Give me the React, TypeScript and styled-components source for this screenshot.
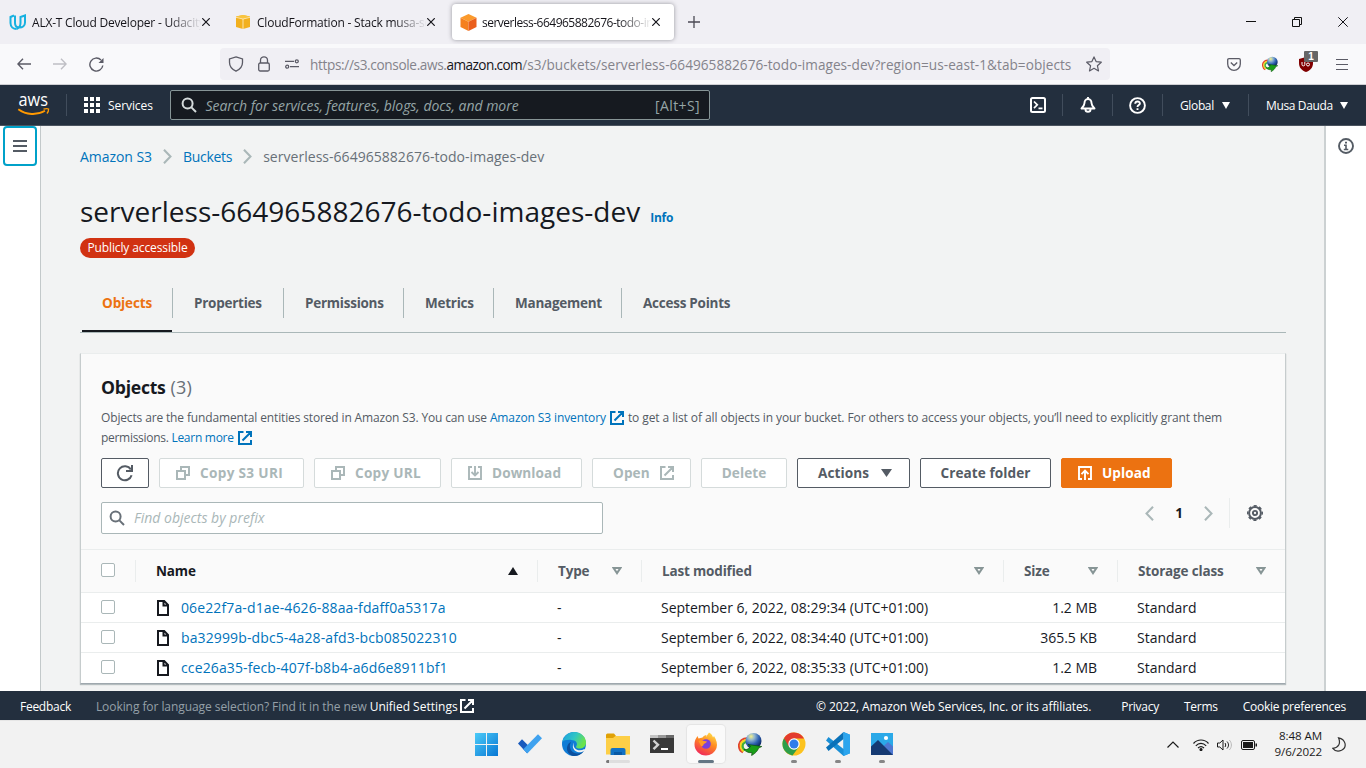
import React from "react";
import styled, { createGlobalStyle, css } from "styled-components";

const GlobalStyle = createGlobalStyle`
  *, *::before, *::after { box-sizing: border-box; }
  html, body { margin: 0; padding: 0; overflow: hidden; }
  body { font-family: "Open Sans", "Noto Sans", sans-serif; font-size: 14px; color: #16191f; }
  svg { display: block; flex: none; }
`;

const Screen = styled.div`
  display: flex;
  flex-direction: column;
  width: 1366px;
  height: 768px;
  background: #fff;
`;

/* ---------- browser chrome ---------- */

const TabStrip = styled.div`
  display: flex;
  align-items: center;
  height: 44px;
  background: #f0eff4;
`;
const BrowserTab = styled.div<{ $active?: boolean }>`
  display: flex;
  align-items: center;
  width: 222px;
  height: 36px;
  margin: 0 1px 0 2px;
  padding-left: ${(p) => (p.$active ? 8 : 7)}px;
  border-radius: 4px;
  ${(p) => p.$active && css`background: #fff; box-shadow: 0 0 4px rgba(90, 90, 100, 0.6);`}
`;
const TabLabel = styled.span<{ $gap?: number }>`
  width: 169px;
  margin-left: ${(p) => p.$gap ?? 6}px;
  padding-top: 2px;
  margin-right: 1px;
  overflow: hidden;
  white-space: nowrap;
  font-size: 12px;
  line-height: 20px;
  letter-spacing: var(--track, -0.21px);
  color: #15141a;
  mask-image: linear-gradient(to right, #000 136px, transparent 170px);
`;
const NarrowLabel = styled(TabLabel)`
  --track: -0.5px;
`;
const NewTab = styled.div`
  margin-left: 13px;
`;
const WindowButtons = styled.div`
  display: flex;
  margin-left: auto;
`;
const WindowButton = styled.div`
  display: grid;
  place-items: center;
  width: 46px;
  height: 44px;
`;
const Toolbar = styled.div`
  display: flex;
  align-items: center;
  height: 41px;
  padding: 0 6px;
  background: #f9f9fb;
  border-bottom: 1px solid #cfcfd3;
`;
const ToolSlot = styled.div`
  position: relative;
  display: grid;
  place-items: center;
  width: 36px;
  height: 32px;
`;
const UrlBox = styled.div`
  display: flex;
  align-items: center;
  width: 890px;
  height: 32px;
  margin-left: 106px;
  padding: 0 2px;
  border-radius: 4px;
  background: #f0eff4;
`;
const UrlSlot = styled.div`
  display: grid;
  place-items: center;
  width: 28px;
`;
const Url = styled.div`
  flex: 1;
  margin-left: 4px;
  padding-top: 2px;
  white-space: nowrap;
  line-height: 20px;
  font-size: 13.6px;
  letter-spacing: 0.04px;
  color: #84838b;
`;
const Scheme = styled.span`letter-spacing: -0.35px;`;
const Host = styled.span`letter-spacing: -0.59px; color: #15141a;`;
const ToolbarEnd = styled.div`
  display: flex;
  margin-left: auto;
`;
const Count = styled.span`
  position: absolute;
  left: 16px;
  top: 3px;
  width: 14px;
  height: 11px;
  border-radius: 1px;
  background: #666;
  color: #fff;
  text-align: center;
  font: bold 10px/11px "Liberation Sans", sans-serif;
`;

/* ---------- console header ---------- */

const Nav = styled.header`
  display: flex;
  align-items: center;
  height: 41px;
  background: #232f3e;
  border-bottom: 1px solid #4b545f;
  color: #fff;
  font-size: 12px;
`;
const NavRule = styled.i`
  width: 1px;
  height: 22px;
  background: #414d5c;
`;
const Logo = styled.div`
  width: 66px;
  padding-left: 16px;
`;
const Services = styled.div`
  display: flex;
  align-items: center;
  gap: 8px;
  width: 103px;
  padding-left: 17px;
  font-weight: 500;
  letter-spacing: -0.08px;
`;
const NavSearch = styled.div`
  display: flex;
  align-items: center;
  width: 540px;
  height: 30px;
  padding: 0 9px 0 10px;
  border: 1px solid #879596;
  border-radius: 2px;
  background: #161a20;
  color: #95a5a6;
  font-size: 14px;
`;
const Hint = styled.em`
  margin-left: 8.5px;
  letter-spacing: -0.04px;
`;
const Shortcut = styled.span`
  margin-left: auto;
  letter-spacing: 0.4px;
`;
const NavEnd = styled.div`
  display: flex;
  align-items: center;
  margin-left: auto;
`;
const NavIcon = styled.div`
  display: grid;
  place-items: center;
  width: 49px;
`;
const NavMenu = styled.div<{ $w: number }>`
  display: flex;
  align-items: center;
  justify-content: space-between;
  width: ${(p) => p.$w}px;
  padding: 0 18px 0 17px;
  font-weight: 500;
  letter-spacing: -0.36px;
`;

/* ---------- page ---------- */

const Body = styled.div`
  display: flex;
  height: 565px;
`;
const Rail = styled.aside<{ $right?: boolean }>`
  flex: none;
  width: ${(p) => (p.$right ? 42 : 41)}px;
  background: #fff;
  ${(p) => (p.$right ? css`border-left: 2px solid #ccd1d2; padding: 12px 0 0 12px;` : css`border-right: 1px solid #c3c9ca; padding-left: 3px;`)}
`;
const MenuButton = styled.div`
  display: grid;
  place-items: center;
  width: 34px;
  height: 40px;
  border: 2px solid #00a1c9;
  border-radius: 4px;
`;
const Main = styled.main`
  flex: 1;
  padding: 20px 38px 0 39px;
  background: #f2f3f3;
`;
const Crumbs = styled.nav`
  display: flex;
  align-items: center;
  height: 22px;
  line-height: 22px;
  padding-bottom: 1px;
`;
const CrumbArrow = styled.div`margin: 0 11px 0 11px;`;
const Link = styled.a<{ $track?: number }>`
  color: #0073bb;
  letter-spacing: ${(p) => p.$track ?? 0}px;
`;
const Current = styled.span`color: #687078; letter-spacing: 0.03px;`;
const TitleRow = styled.div`
  display: flex;
  align-items: baseline;
  height: 44px;
  margin-top: 23px;
`;
const Title = styled.h1`
  margin: 0;
  font-size: 28px;
  line-height: 40px;
  font-weight: 400;
  letter-spacing: 0.01px;
`;
const Info = styled.a`
  margin-left: 10px;
  color: #0073bb;
  font-size: 12px;
  font-weight: 700;
  letter-spacing: -0.23px;
`;
const Badge = styled.span`
  display: block;
  width: 115px;
  height: 20px;
  margin-top: 3px;
  border-radius: 10px;
  background: #d13212;
  color: #fff;
  text-align: center;
  font-size: 12px;
  line-height: 19px;
  letter-spacing: -0.12px;
`;
const Tabs = styled.div`
  display: flex;
  height: 45px;
  margin-top: 30px;
  padding-left: 1px;
  border-bottom: 1px solid #aab7b8;
`;
const Tab = styled.div<{ $w: number; $active?: boolean }>`
  position: relative;
  width: ${(p) => p.$w}px;
  height: 30px;
  padding-left: 21px;
  border-right: 1px solid #aab7b8;
  font-size: 13.5px;
  line-height: 30px;
  font-weight: 700;
  letter-spacing: -0.25px;
  white-space: nowrap;
  color: ${(p) => (p.$active ? "#ec7211" : "#545b64")};
  &:last-child { border-right: 0; }
  ${(p) => p.$active && css`
    letter-spacing: -0.1px;
    &::after { content: ""; position: absolute; left: 1px; right: 0; top: 42px; height: 2px; background: #16191f; }
  `}
`;
const Card = styled.section`
  width: 1206px;
  height: 331px;
  margin-top: 20px;
  border: 1px solid #eaeded;
  border-left-color: #c6cccd;
  border-right-color: #c6cccd;
  border-bottom-color: #9fa8ae;
  background: #fafafa;
  box-shadow: 0 1px 1px rgba(0, 28, 36, 0.25);
`;
const CardHead = styled.div`
  height: 196px;
  padding: 21px 20px 0;
  border-bottom: 1px solid #eaeded;
`;
const Heading = styled.h2`
  margin: 0;
  font-size: 17.6px;
  line-height: 24px;
  letter-spacing: -0.25px;
`;
const Total = styled.span`
  margin-left: 5px;
  font-weight: 400;
  font-size: 18px;
  letter-spacing: 0.2px;
  color: #687078;
`;
const Desc = styled.p`
  margin: 9px 0 0;
  color: #545b64;
  font-size: 12px;
  line-height: 20px;
  letter-spacing: -0.145px;
  white-space: nowrap;
`;
const Wide = styled.span`letter-spacing: -0.095px;`;
const Tight = styled.span`letter-spacing: -0.29px;`;
const InlineIcon = styled.span`
  display: inline-block;
  margin: 0 4px;
  vertical-align: -3px;
`;
const Actions = styled.div`
  display: flex;
  gap: 10px;
  margin-top: 10px;
`;
const Button = styled.button<{ $w: number; $kind?: "off" | "primary"; $pad?: number; $track?: number }>`
  display: flex;
  align-items: center;
  justify-content: ${(p) => (p.$pad ? "flex-start" : "center")};
  gap: 10px;
  width: ${(p) => p.$w}px;
  height: 30px;
  padding: 0 0 0 ${(p) => p.$pad ?? 0}px;
  border: 1px solid #545b64;
  border-radius: 2px;
  background: #fff;
  color: #545b64;
  font: 700 13.6px/26px "Open Sans", sans-serif;
  letter-spacing: ${(p) => p.$track ?? 0.08}px;
  white-space: nowrap;
  ${(p) => p.$kind === "off" && css`border-color: #d5dbdb; color: #aab7b8;`}
  ${(p) => p.$kind === "primary" && css`border-color: #ec7211; background: #ec7211; color: #fff;`}
`;
const ButtonText = styled.span`
  height: 28px;
  line-height: 27px;
`;
const MenuCaret = styled.span`
  margin-left: 2px;
`;
const FilterRow = styled.div`
  display: flex;
  margin-top: 14px;
`;
const Filter = styled.div`
  display: flex;
  align-items: center;
  gap: 9px;
  width: 502px;
  height: 32px;
  padding-left: 7px;
  border: 1px solid #aab7b8;
  border-radius: 2px;
  background: #fff;
  color: #687078;
`;
const Placeholder = styled.em`
  height: 30px;
  line-height: 29px;
  color: #aab7b8;
`;
const Pager = styled.div`
  display: flex;
  align-items: center;
  height: 30px;
  margin: -4px 2px 0 auto;
`;
const PageNo = styled.b`
  width: 50px;
  text-align: center;
  font-size: 13.5px;
`;
const PagerRule = styled.i`
  width: 1px;
  height: 30px;
  margin: 0 17px 0 16px;
  background: #eaeded;
`;

const Row = styled.div<{ $head?: boolean; $last?: boolean }>`
  display: grid;
  grid-template-columns: 55px 402px 104px 362px 114px 167px;
  align-items: center;
  height: ${(p) => (p.$head ? 43 : 30)}px;
  background: ${(p) => (p.$head ? "#fafafa" : "#fff")};
  border-bottom: 1px solid ${(p) => (p.$last ? "#fff" : "#eaeded")};
`;
const Th = styled.div<{ $dark?: boolean }>`
  display: flex;
  align-items: center;
  justify-content: space-between;
  height: 22px;
  padding: 0 19px 0 20px;
  border-right: 1px solid #eaeded;
  color: ${(p) => (p.$dark ? "#16191f" : "#545b64")};
  font-size: 13.5px;
  font-weight: 700;
  letter-spacing: -0.17px;
  &:first-child { padding-left: 19px; }
  &:last-child { border-right: 0; }
`;
const Td = styled.div<{ $end?: boolean }>`
  display: flex;
  align-items: center;
  gap: 12px;
  justify-content: ${(p) => (p.$end ? "flex-end" : "flex-start")};
  padding: 0 21px 0 19px;
  letter-spacing: -0.02px;
  white-space: nowrap;
`;
const NameTd = styled(Td)`
  padding-left: 21px;
`;
const Check = styled.span`
  width: 14px;
  height: 14px;
  margin: -2px 0 0 1px;
  border: 1px solid #aab7b8;
  border-radius: 2px;
  background: #fff;
`;

const Footer = styled.footer`
  display: flex;
  align-items: center;
  height: 29px;
  padding: 1px 20px 0;
  background: #232f3e;
  color: #fff;
  font-size: 12px;
  white-space: nowrap;
`;
const FootItem = styled.span<{ $gap?: number; $track?: number; $dim?: boolean }>`
  margin-left: ${(p) => p.$gap ?? 0}px;
  letter-spacing: ${(p) => p.$track ?? -0.27}px;
  font-weight: ${(p) => (p.$dim ? 400 : 500)};
  color: ${(p) => (p.$dim ? "#95a0a8" : "#fff")};
`;
const FootIcon = styled.span`
  margin: -1px 0 0 2px;
`;
const FootEnd = styled.div`
  display: flex;
  margin-left: auto;
`;

/* ---------- taskbar ---------- */

const Taskbar = styled.div`
  display: grid;
  grid-template-columns: 464px 440px 1fr;
  height: 48px;
  border-top: 1px solid #e6e6e6;
  background: #f2f2f2;
`;
const Apps = styled.div`
  grid-column: 2;
  display: flex;
`;
const AppSlot = styled.div`
  display: flex;
  flex-direction: column;
  align-items: center;
  width: 44px;
  padding-top: 4px;
`;
const AppTile = styled.div<{ $active?: boolean }>`
  position: relative;
  display: grid;
  place-items: center;
  width: 38px;
  height: 38px;
  border-radius: 4px;
  ${(p) => p.$active && css`background: #fafafa; box-shadow: 0 0 1px 1px #e4e4e4;`}
`;
const Running = styled.i<{ $w: number; $tone?: string }>`
  position: absolute;
  bottom: 0;
  width: ${(p) => p.$w}px;
  height: 3px;
  border-radius: 2px;
  background: ${(p) => p.$tone ?? "#868686"};
`;
const Tray = styled.div`
  display: flex;
  align-items: center;
  justify-content: flex-end;
  padding-right: 20px;
`;
const TrayIcons = styled.div`
  display: flex;
  align-items: center;
  gap: 8px;
  margin-right: 18px;
`;
const Clock = styled.div`
  margin: -2px 10px 0 0;
  text-align: right;
  font-size: 11.6px;
  line-height: 16px;
  letter-spacing: -0.1px;
  color: #1b1b1b;
`;

/* ---------- icons ---------- */

const CloseX = ({ s = 8, w = 1.2 }: { s?: number; w?: number }) => (
  <svg width={s} height={s} viewBox="0 0 10 10" stroke="#15141a" strokeWidth={w * 10 / s}><path d="M0.3 0.3 9.7 9.7M9.7 0.3 0.3 9.7" /></svg>
);
const Lens = ({ c }: { c: string }) => (
  <svg width="16" height="16" viewBox="0 0 16 16" fill="none" stroke={c} strokeWidth="2"><circle cx="6.6" cy="6.6" r="5" /><path d="m10.4 10.4 4.6 4.6" /></svg>
);
const External = ({ s = 14 }: { s?: number }) => (
  <svg width={s} height={s} viewBox="0 0 14 14" fill="none" stroke="currentColor" strokeWidth="2"><path d="M5.5 1H1v12h12V9M8 1h5v5M12.8 1.2 4.5 9.5" /></svg>
);
const CopyIcon = () => (
  <svg width="14" height="14" viewBox="0 0 14 14" fill="none" stroke="currentColor" strokeWidth="2"><path d="M1 5h8v8H1zM5 5V1h8v8H9" /></svg>
);
const DownloadIcon = () => (
  <svg width="14" height="14" viewBox="0 0 14 14" fill="none" stroke="currentColor" strokeWidth="1.9"><path d="M4 1H1v12h12V1h-3M7 0v9M3.5 6 7 9.500 10.500 6" /></svg>
);
const UploadIcon = () => (
  <svg width="14" height="14" viewBox="0 0 14 14" fill="none" stroke="currentColor" strokeWidth="1.9"><path d="M4 13H1V1h12v12h-3M7 14V5M3.500 8.200 7 4.700l3.500 3.500" /></svg>
);
const Refresh = () => (
  <svg width="18" height="18" viewBox="0 0 18 18" fill="none" stroke="currentColor" strokeWidth="2"><path d="M15.600 11.200A7 7 0 1 1 14.800 5.500M16 1v6h-6" /></svg>
);
const Chevron = ({ left, w = 8, h = 14 }: { left?: boolean; w?: number; h?: number }) => (
  <svg width={w} height={h} viewBox="0 0 8 14" fill="none" stroke="#aab7b8" strokeWidth="1.900"><path d={left ? "M7.300 .7 1.200 7l6.100 6.300" : "M.7.700 6.800 7 .7 13.300"} /></svg>
);
const Sort = ({ up }: { up?: boolean }) => up
  ? <svg width="10" height="8" viewBox="0 0 10 8"><path d="M5 0 10 8H0z" fill="#16191f" /></svg>
  : <svg width="10" height="8" viewBox="0 0 10 8" fill="none" stroke="#879596" strokeWidth="2"><path d="M1.600 1h6.800L5 6.100z" /></svg>;
const Caret = ({ w = 9, h = 7 }: { w?: number; h?: number }) => (
  <svg width={w} height={h} viewBox="0 0 10 8" preserveAspectRatio="none" fill="currentColor"><path d="M0 0h10L5 8z" /></svg>
);
const FileIcon = () => (
  <svg width="12" height="16" viewBox="0 0 12 16" fill="none" stroke="#16191f" strokeWidth="2"><path d="M1 1h6.200L11 4.800V15H1zM6.500 1v4.500H11" /></svg>
);
const Gear = () => (
  <svg width="16" height="16" viewBox="0 0 16 16" fill="none" stroke="#545b64"><circle cx="8" cy="8" r="5.900" strokeWidth="2" /><circle cx="8" cy="8" r="7.300" strokeWidth="1.400" strokeDasharray="3.200 2.530" strokeDashoffset="1.600" /><circle cx="8" cy="8" r="2.100" strokeWidth="1.900" /></svg>
);
const Globe = ({ s }: { s: number }) => (
  <svg width={s} height={s} viewBox="0 0 24 24">
    <defs><radialGradient id="gl" cx=".35" cy=".22" r=".75"><stop offset="0" stopColor="#f2f08a" /><stop offset=".3" stopColor="#8fb5cf" /><stop offset=".65" stopColor="#2f62b4" /><stop offset="1" stopColor="#0e2a66" /></radialGradient></defs>
    <path d="M11 6.500C5 5.500.800 9 1 14c.2 3.500 2 5.500 4 6.300" fill="none" stroke="#e2452f" strokeWidth="2.200" />
    <path d="M11 8.300C6.500 7.300 2.600 10 2.800 14c.2 3 1.500 4.500 3 5.200" fill="none" stroke="#f6d71f" strokeWidth="2.200" />
    <path d="M11 10.200C8 9.200 4.500 11 4.600 14c.1 2.300 1.200 3.400 2.600 4" fill="none" stroke="#3fae3c" strokeWidth="2.200" />
    <circle cx="15.500" cy="9" r="8" fill="url(#gl)" />
    <path d="M6 17.500c3.500.5 5.500-1 6.500-3.500L10 12.500l13.800 2-3.200 1.600c-1 3-3.500 5.500-7 7.400l.400-3c-3 .6-6-.5-8-3z" fill="#1a9e18" stroke="#0b4f0c" strokeWidth=".7" />
  </svg>
);

const apps: { icon: React.ReactNode; w?: number; tone?: string; active?: boolean }[] = [
  { icon: <svg width="23" height="23" viewBox="0 0 23 23"><defs><linearGradient id="win" x1="0" y1="0" x2="1" y2="1"><stop offset="0" stopColor="#4ccbf8" /><stop offset="1" stopColor="#0877d4" /></linearGradient></defs><path d="M0 0h11v11H0zM12 0h11v11H12zM0 12h11v11H0zM12 12h11v11H12z" fill="url(#win)" /></svg> },
  { icon: <svg width="24" height="20" viewBox="0 0 24 20"><path d="M0 9.500 4 5.300l9 9-4 5z" fill="#185abd" /><path d="M20 .2 24 4.300 9.300 19.500 5.200 15.300z" fill="#3fa2ef" /></svg> },
  { icon: <svg width="24" height="24" viewBox="0 0 24 24"><defs><linearGradient id="ed" x1="0" y1="0" x2="1" y2=".4"><stop offset="0" stopColor="#1b9de2" /><stop offset=".55" stopColor="#2fc5c5" /><stop offset="1" stopColor="#6be34b" /></linearGradient></defs><circle cx="12" cy="12" r="12" fill="#0f7cd6" /><path d="M.3 10C1.500 4 6.500 0 12 0c7 0 12 5 12 10.500 0 4-3 6-6.500 6-3 0-4.200-1.200-3-2.800C16 11 13.500 8 9.500 8 5 7.500 1.500 8.500.3 10z" fill="url(#ed)" /><path d="M9 10c-3 5 0 11 6 11.500 3 .2 5.500-1 7-2.700C19.500 22.500 16 24 12 24 7 23.500 4.500 19 5 15.500 5.500 12.500 7 10.500 9 10z" fill="#0c4f9d" /><path d="M12.500 10.500c-1.500 1.300-1.500 5.500 2.500 7.300 2 .9 5 .7 7.500-.8l.6 1.200c-2.600 2.300-7 2.700-9.600.8-3-2-3.500-6.500-1-8.500z" fill="#f2f2f2" /></svg> },
  { icon: <svg width="24" height="22" viewBox="0 0 24 22"><path d="M0 2a1.500 1.500 0 0 1 1.500-1.500H8L10 3h14v6H0z" fill="#e0a106" /><path d="M0 5h7l2.500-2H24v18.500H0z" fill="#fdcf47" /><path d="M4.500 22v-5a2 2 0 0 1 2-2h11a2 2 0 0 1 2 2v5z" fill="#1272c4" /><path d="M8 19h8v3H8z" fill="#0a5aa5" /></svg>, w: 24, tone: "linear-gradient(90deg,#777 0 3px,#dedede 3px)" },
  { icon: <svg width="24" height="18" viewBox="0 0 24 18"><path d="M0 0h24v18H0z" fill="#393939" /><path d="M0 0h8v3H0z" fill="#c4c4c4" /><path d="M8 0h8v3H8z" fill="#9a9a9a" /><path d="M16 0h8v3h-8z" fill="#6a6a6a" /><path d="m3.500 5.500 4.500 4.300-4.500 4.400" fill="none" stroke="#d2d2d2" strokeWidth="2.400" /><path d="M11 14h7" stroke="#fff" strokeWidth="2" /></svg> },
  { icon: <svg width="24" height="24" viewBox="0 0 24 24"><defs><linearGradient id="fx" x1=".8" y1="0" x2=".3" y2="1"><stop offset="0" stopColor="#ffe14a" /><stop offset=".45" stopColor="#ff8a20" /><stop offset="1" stopColor="#f0265c" /></linearGradient></defs><path d="M2 6.500 3.500 4l1 2.500L8.500 5.500C9.500 4 11 3 12.500 3l-.5 2 3-4.500C18 2 18.500 4 19 5.500l1-1.500c2.500 4 3.800 8 2.500 12-1.500 4.500-6 7.500-10.500 7.500C5.500 23.500.5 18.500.5 12.500.5 10 1 8 2 6.500z" fill="url(#fx)" /><circle cx="12" cy="12" r="4.800" fill="#7a3fdc" /><path d="M4.500 9c2-1.500 4-.5 5.500 0 1 .2 2 .2 3 .5-.5 1.800-3 1.700-3.500 3 0 1.500-1.500 2-2.500 1.500z" fill="#ff9a27" /></svg>, w: 16, tone: "#647684", active: true },
  { icon: <Globe s={24} /> },
  { icon: <svg width="24" height="24" viewBox="0 0 24 24"><circle cx="12" cy="12" r="11.500" fill="#fcc31e" /><path d="M12 12 2 6.200A11.500 11.500 0 0 0 10.500 23.400L17 14.800z" fill="#2d9e4a" /><path d="M2 6.200A11.500 11.500 0 0 1 22 6.500H12L7 14.800z" fill="#e33b2e" /><circle cx="12" cy="12" r="5.700" fill="#fff" /><circle cx="12" cy="12" r="4.500" fill="#2f7de9" /></svg>, w: 6 },
  { icon: <svg width="24" height="24" viewBox="0 0 24 24"><path d="M17.500 0 24 2.800v18.400L17.500 24 0 8.500 2.500 5 17.500 17z" fill="#1a8fd6" /><path d="M17.500 0 0 15.500 2.500 19 17.500 7z" fill="#0971b8" /><path d="m17.500 0 6.500 2.800v18.400L17.500 24z" fill="#2ba5ee" /></svg>, w: 6 },
  { icon: <svg width="22" height="22" viewBox="0 0 22 22"><path d="M0 0h22v22H0z" fill="#2ba9e8" /><path d="M11 14.500 17 9l5 4.500V22H11z" fill="#4f78d2" /><path d="M0 13.500 7 7l15 15H0z" fill="#153a72" /><circle cx="15" cy="5" r="2.100" fill="#fff" /></svg>, w: 6 },
];

const objects = [
  { name: "06e22f7a-d1ae-4626-88aa-fdaff0a5317a", date: "September 6, 2022, 08:29:34 (UTC+01:00)", size: "1.2 MB" },
  { name: "ba32999b-dbc5-4a28-afd3-bcb085022310", date: "September 6, 2022, 08:34:40 (UTC+01:00)", size: "365.5 KB" },
  { name: "cce26a35-fecb-407f-b8b4-a6d6e8911bf1", date: "September 6, 2022, 08:35:33 (UTC+01:00)", size: "1.2 MB" },
];

export default function App() {
  return (
    <Screen>
      <GlobalStyle />
      <TabStrip>
        <BrowserTab>
          <svg width="17" height="16" viewBox="0 0 17 16" fill="none" stroke="#17b1e0" strokeWidth="2"><path d="M5 1.500 1.500 3v6c0 4 3 6 6 6" /><path d="M6 1.500v7.500c0 3 1.500 4.500 4.500 4.500s5.500-2 5.500-5V1.500L11.500 3v6c0 3-1.500 5-4 6" /></svg>
          <TabLabel>ALX-T Cloud Developer - Udacity</TabLabel>
          <CloseX />
        </BrowserTab>
        <BrowserTab>
          <svg width="17" height="16" viewBox="-1 0 17 16"><path d="M1 2.500 8 1l7 1.500V13l-7 2-7-2z" fill="#f2b01e" /><path d="M1 2.500 8 1l7 1.500L8 4.500z" fill="#f9c53f" /><path d="M1 3.300 8 5l7-1.700M8 5v10" stroke="#fff1cd" strokeWidth=".8" fill="none" /></svg>
          <TabLabel>CloudFormation - Stack musa-serverless</TabLabel>
          <CloseX />
        </BrowserTab>
        <BrowserTab $active>
          <svg width="17" height="17" viewBox="0 0 17 17"><path d="m8.500 0 8 3.700-8 4-8-4z" fill="#fb9a2c" /><path d="m.5 3.700 8 4V17l-8-4z" fill="#f5801f" /><path d="m16.500 3.700-8 4V17l8-4z" fill="#ea5f1c" /></svg>
          <NarrowLabel $gap={5}>serverless-664965882676-todo-images-dev</NarrowLabel>
          <CloseX />
        </BrowserTab>
        <NewTab><svg width="12" height="12" viewBox="0 0 12 12" stroke="#4b4a54" strokeWidth="1.300"><path d="M6 0v12M0 6h12" /></svg></NewTab>
        <WindowButtons>
          <WindowButton><svg width="10" height="10" viewBox="0 0 10 10" stroke="#111"><path d="M0 4.500h10" /></svg></WindowButton>
          <WindowButton><svg width="10" height="10" viewBox="0 0 10 10" stroke="#111" fill="none"><path d="M.5 2.500h7v7h-7zM2.500 2.500v-2h7v7h-2" /></svg></WindowButton>
          <WindowButton><CloseX s={10} w={1} /></WindowButton>
        </WindowButtons>
      </TabStrip>
      <Toolbar>
        <ToolSlot><svg width="14" height="12" viewBox="0 0 14 12" fill="none" stroke="#5b5b66" strokeWidth="1.400"><path d="M14 6H1M6 .7.900 6 6 11.300" /></svg></ToolSlot>
        <ToolSlot><svg width="14" height="12" viewBox="0 0 14 12" fill="none" stroke="#bfbfc5" strokeWidth="1.400"><path d="M0 6h13M8 .7 13.100 6 8 11.300" /></svg></ToolSlot>
        <ToolSlot><svg width="15" height="15" viewBox="0 0 15 15" fill="none" stroke="#5b5b66" strokeWidth="1.400"><path d="M13.800 8.500A6.500 6.500 0 1 1 12 3" /><path d="M14.500 1v5h-5z" fill="#5b5b66" stroke="none" /></svg></ToolSlot>
        <UrlBox>
          <UrlSlot><svg width="16" height="16" viewBox="0 0 16 16" fill="none" stroke="#5b5b66" strokeWidth="1.300"><path d="M8 .9 14.500 3v3.500c0 4-2.800 7-6.500 8.700C4.300 13.500 1.500 10.500 1.500 6.500V3z" /></svg></UrlSlot>
          <UrlSlot><svg width="12" height="16" viewBox="0 0 12 16" fill="none" stroke="#5b5b66" strokeWidth="1.300"><rect x=".7" y="7" width="10.600" height="8" rx="1.500" /><path d="M2.500 7V4.300a3.500 3.500 0 0 1 7 0V7" /></svg></UrlSlot>
          <UrlSlot><svg width="14" height="10" viewBox="0 0 14 10" fill="none" stroke="#5b5b66" strokeWidth="1.300"><path d="M0 2.300h9M5 7.700h9" /><circle cx="11.800" cy="2.300" r="1.500" /><circle cx="2.200" cy="7.700" r="1.500" /></svg></UrlSlot>
          <Url><Scheme>https://s3.console.aws.</Scheme><Host>amazon.com</Host>/s3/buckets/serverless-664965882676-todo-images-dev?region=us-east-1&amp;tab=objects</Url>
          <UrlSlot><svg width="16" height="16" viewBox="0 0 16 16" fill="none" stroke="#5b5b66" strokeWidth="1.200" strokeLinejoin="round"><path d="m8 .9 2.100 4.700 5.200.6-3.900 3.500 1.100 5.200L8 12.300l-4.500 2.600 1.100-5.200L.7 6.200l5.200-.6z" /></svg></UrlSlot>
        </UrlBox>
        <ToolbarEnd>
          <ToolSlot><svg width="14" height="13" viewBox="0 0 14 13" fill="none" stroke="#5b5b66" strokeWidth="1.300"><path d="M2 .7h10c.8 0 1.300.5 1.300 1.300v4a6.300 6.300 0 0 1-12.600 0V2C.7 1.200 1.200.7 2 .7z" /><path d="m3.800 4.500 3.200 3 3.200-3" /></svg></ToolSlot>
          <ToolSlot><Globe s={16} /></ToolSlot>
          <ToolSlot>
            <svg width="14" height="15" viewBox="0 0 14 15"><path d="m7 0 7 2v4c0 5-3 7.500-7 9-4-1.500-7-4-7-9V2z" fill="#800000" /><path d="M3 5v2.500a1.400 1.400 0 0 0 2.800 0V5M7.500 7.500a1.500 1.500 0 1 0 3 0 1.500 1.500 0 1 0-3 0" fill="none" stroke="#fff" strokeWidth="1" /></svg>
            <Count>1</Count>
          </ToolSlot>
          <ToolSlot><svg width="12" height="11" viewBox="0 0 12 11" stroke="#5b5b66" strokeWidth="1.200"><path d="M0 .5h12M0 5.500h12M0 10.500h12" /></svg></ToolSlot>
        </ToolbarEnd>
      </Toolbar>

      <Nav>
        <Logo>
          <svg width="34" height="24" viewBox="0 0 34 24">
            <text x="2.500" y="13" fontSize="18" fontWeight="500" textLength="29.500" lengthAdjust="spacingAndGlyphs" fill="#fff" fontFamily="Open Sans, sans-serif">aws</text>
            <path d="M2.300 16.300C10 22 21 22.500 29 17.800" fill="none" stroke="#f90" strokeWidth="1.900" />
            <path d="M27.500 16.200c2-.6 4-.7 5.100-.2.100 1.500-.5 3.200-1.700 4.500" fill="none" stroke="#f90" strokeWidth="1.300" />
          </svg>
        </Logo>
        <NavRule />
        <Services>
          <svg width="16" height="16" viewBox="0 0 16 16" fill="#fff"><path d="M0 0h4v4H0zM6 0h4v4H6zM12 0h4v4h-4zM0 6h4v4H0zM6 6h4v4H6zM12 6h4v4h-4zM0 12h4v4H0zM6 12h4v4H6zM12 12h4v4h-4z" /></svg>
          Services
        </Services>
        <NavSearch>
          <Lens c="#d5dbdb" />
          <Hint>Search for services, features, blogs, docs, and more</Hint>
          <Shortcut>[Alt+S]</Shortcut>
        </NavSearch>
        <NavEnd>
          <NavIcon><svg width="16" height="16" viewBox="0 0 16 16" fill="none" stroke="#fff" strokeWidth="2"><rect x="1" y="1" width="14" height="14" rx="1.500" /><path d="m4 4.500 3.300 3.300L4 11.200M8.500 11.300h4" strokeWidth="1.700" /></svg></NavIcon>
          <NavRule />
          <NavIcon><svg width="16" height="16" viewBox="0 0 16 16" fill="none" stroke="#fff" strokeWidth="1.900" strokeLinejoin="round"><path d="M8 0v2M8 2C5.500 2 4.500 4 4.500 6c0 2.500-1 3.500-3 5.500h13c-2-2-3-3-3-5.500 0-2-1-4-3.500-4zM5.500 12.500c0 3 5 3 5 0" /></svg></NavIcon>
          <NavRule />
          <NavIcon><svg width="17" height="17" viewBox="0 0 17 17" fill="none" stroke="#fff" strokeWidth="1.900"><circle cx="8.500" cy="8.500" r="7.400" /><path d="M6.200 6.700c.2-3 4.700-2.900 4.700-.2 0 1.600-2.400 1.600-2.400 3.500M8.500 11.200V13" /></svg></NavIcon>
          <NavRule />
          <NavMenu $w={85}>Global <Caret w={8} /></NavMenu>
          <NavRule />
          <NavMenu $w={117}>Musa Dauda <Caret w={8} /></NavMenu>
        </NavEnd>
      </Nav>

      <Body>
        <Rail><MenuButton><svg width="14" height="12" viewBox="0 0 14 12" stroke="#545b64" strokeWidth="2"><path d="M0 1h14M0 6h14M0 11h14" /></svg></MenuButton></Rail>
        <Main>
          <Crumbs>
            <Link $track={-0.05}>Amazon S3</Link>
            <CrumbArrow><Chevron w={9} h={15} /></CrumbArrow>
            <Link $track={-0.3}>Buckets</Link>
            <CrumbArrow><Chevron w={9} h={15} /></CrumbArrow>
            <Current>serverless-664965882676-todo-images-dev</Current>
          </Crumbs>
          <TitleRow>
            <Title>serverless-664965882676-todo-images-dev</Title>
            <Info>Info</Info>
          </TitleRow>
          <Badge>Publicly accessible</Badge>
          <Tabs>
            <Tab $w={92} $active>Objects</Tab>
            <Tab $w={111}>Properties</Tab>
            <Tab $w={120}>Permissions</Tab>
            <Tab $w={90}>Metrics</Tab>
            <Tab $w={128}>Management</Tab>
            <Tab $w={130}>Access Points</Tab>
          </Tabs>
          <Card>
            <CardHead>
              <Heading>Objects<Total>(3)</Total></Heading>
              <Desc>
                Objects are the fundamental entities stored in Amazon S3. You can use <Link $track={-0.11}>Amazon S3 inventory<InlineIcon><External /></InlineIcon></Link><Wide>to get a list of all objects in your bucket. For others to access your objects, you’ll need to explicitly grant them</Wide>
                <br /><Tight>permissions. </Tight><Link $track={-0.27}>Learn more<InlineIcon><External /></InlineIcon></Link>
              </Desc>
              <Actions>
                <Button $w={48}><Refresh /></Button>
                <Button $w={145} $kind="off" $pad={16} $track={0.32}><CopyIcon /><ButtonText>Copy S3 URI</ButtonText></Button>
                <Button $w={127} $kind="off" $pad={16} $track={0.25}><CopyIcon /><ButtonText>Copy URL</ButtonText></Button>
                <Button $w={131} $kind="off" $pad={16}><DownloadIcon /><ButtonText>Download</ButtonText></Button>
                <Button $w={99} $kind="off" $pad={20}><ButtonText>Open</ButtonText><External /></Button>
                <Button $w={86} $kind="off"><ButtonText>Delete</ButtonText></Button>
                <Button $w={113} $pad={20}><ButtonText>Actions</ButtonText><MenuCaret><Caret w={11} h={8} /></MenuCaret></Button>
                <Button $w={131}><ButtonText>Create folder</ButtonText></Button>
                <Button $w={111} $kind="primary" $pad={16}><UploadIcon /><ButtonText>Upload</ButtonText></Button>
              </Actions>
              <FilterRow>
                <Filter><Lens c="#687078" /><Placeholder>Find objects by prefix</Placeholder></Filter>
                <Pager>
                  <Chevron left w={9} h={15} /><PageNo>1</PageNo><Chevron w={9} h={15} />
                  <PagerRule /><Gear />
                </Pager>
              </FilterRow>
            </CardHead>
            <Row $head>
              <Th><Check /></Th>
              <Th $dark>Name<Sort up /></Th>
              <Th>Type<Sort /></Th>
              <Th>Last modified<Sort /></Th>
              <Th>Size<Sort /></Th>
              <Th>Storage class<Sort /></Th>
            </Row>
            {objects.map((o, i) => (
              <Row key={o.name} $last={i === 2}>
                <Td><Check /></Td>
                <NameTd><FileIcon /><Link $track={0.12}>{o.name}</Link></NameTd>
                <Td>-</Td>
                <Td>{o.date}</Td>
                <Td $end>{o.size}</Td>
                <Td>Standard</Td>
              </Row>
            ))}
          </Card>
        </Main>
        <Rail $right><svg width="16" height="16" viewBox="0 0 16 16" fill="none" stroke="#545b64" strokeWidth="1.900"><circle cx="8" cy="8" r="7" /><path d="M6 7.200h2v4M5.800 11.500h4.500M7 4.600h2" strokeWidth="1.600" /></svg></Rail>
      </Body>

      <Footer>
        <FootItem>Feedback</FootItem>
        <FootItem $gap={25} $track={-0.07} $dim>Looking for language selection? Find it in the new</FootItem>
        <FootItem $gap={3} $track={0}>Unified Settings</FootItem>
        <FootIcon><External /></FootIcon>
        <FootEnd>
          <FootItem $track={-0.09}>© 2022, Amazon Web Services, Inc. or its affiliates.</FootItem>
          <FootItem $gap={30}>Privacy</FootItem>
          <FootItem $gap={25}>Terms</FootItem>
          <FootItem $gap={25}>Cookie preferences</FootItem>
        </FootEnd>
      </Footer>

      <Taskbar>
        <Apps>
          {apps.map((a, i) => (
            <AppSlot key={i}>
              <AppTile $active={a.active}>{a.icon}{a.w && <Running $w={a.w} $tone={a.tone} />}</AppTile>
            </AppSlot>
          ))}
        </Apps>
        <Tray>
          <TrayIcons>
            <svg width="12" height="7" viewBox="0 0 12 7" fill="none" stroke="#1b1b1b" strokeWidth="1.200"><path d="M.5 6.500 6 1l5.500 5.500" /></svg>
            <svg width="22" height="12" viewBox="-6 0 22 12" fill="none" stroke="#1b1b1b" strokeWidth="1.200"><path d="M.5 4.500C4.500-.2 11.500-.2 15.500 4.500M2.800 6.800c3-3.200 7.400-3.200 10.400 0M5 9c1.900-1.800 4.100-1.800 6 0" /><circle cx="8" cy="10.500" r="1" fill="#1b1b1b" /></svg>
            <svg width="16" height="12" viewBox="0 0 16 12" fill="none" stroke="#1b1b1b"><path d="M.5 4h2.300L6 1v10L2.800 8H.5zM8 4c.9 1.200.9 2.800 0 4M10 2.500c2 2.200 2 4.800 0 7" /><path d="M12.300 1c2.800 3 2.800 7 0 10" stroke="#b8b8b8" /></svg>
            <svg width="16" height="10" viewBox="0 0 16 10"><rect x=".5" y=".5" width="13" height="9" rx="1.500" fill="none" stroke="#1b1b1b" /><rect x="2" y="2" width="10" height="6" fill="#1b1b1b" /><path d="M14.500 3.500h1.500v3h-1.500z" fill="#1b1b1b" /></svg>
          </TrayIcons>
          <Clock>8:48 AM<br />9/6/2022</Clock>
          <svg width="14" height="15" viewBox="0 0 14 15" fill="none" stroke="#333" strokeWidth="1.200"><path d="M6.500.8c7.300 1.400 9 9.600 3 12.500-3.300 1.500-6.700.6-8.700-2C6.500 11 9 6.500 6.500.8z" /></svg>
        </Tray>
      </Taskbar>
    </Screen>
  );
}
